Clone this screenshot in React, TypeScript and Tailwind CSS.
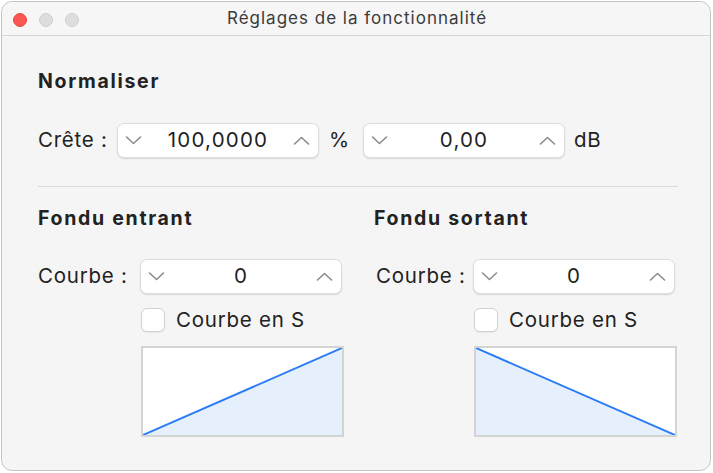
import React from "react";

const font = { fontFamily: "Inter, 'Noto Sans', sans-serif" };

const Chevron = ({ up }: { up?: boolean }) => (
  <svg width="17" height="9" viewBox="0 0 17 9" className="shrink-0">
    <path
      d={up ? "M1.5 8 L8.5 1.5 L15.5 8" : "M1.5 1 L8.5 7.5 L15.5 1"}
      fill="none"
      stroke="#8c8c8c"
      strokeWidth="1.6"
      strokeLinecap="round"
      strokeLinejoin="round"
    />
  </svg>
);

const Stepper = ({ value }: { value: string }) => (
  <div className="flex h-[35px] w-[202px] shrink-0 items-center justify-between rounded-[7px] border border-[#dcdcdc] bg-white pl-[7px] pr-[8px] shadow-[0_1px_1.5px_rgba(0,0,0,0.12)]">
    <Chevron />
    <span className="pl-[1px] text-[20.5px] leading-none tracking-[1.2px] text-[#1e1e1e]">{value}</span>
    <Chevron up />
  </div>
);

const Checkbox = ({ label }: { label: string }) => (
  <div className="flex h-[24px] items-center gap-[11px]">
    <div className="h-[24px] w-[24px] rounded-[6px] border border-[#d2d2d2] bg-white shadow-[0_1px_1px_rgba(0,0,0,0.06)]" />
    <span className="text-[20.5px] leading-none tracking-[0.75px] text-[#222]">{label}</span>
  </div>
);

const Curve = ({ rising }: { rising?: boolean }) => (
  <div className="h-[91px] w-[203px] border-2 border-[#d4d4d4] bg-white">
    <svg width="199" height="87" viewBox="0 0 199 87" className="block">
      <polygon
        points={rising ? "0,87 199,0 199,87" : "0,0 199,87 0,87"}
        fill="#e6f0fd"
      />
      <line
        x1="0"
        y1={rising ? 87 : 0}
        x2="199"
        y2={rising ? 0 : 87}
        stroke="#2a7cf6"
        strokeWidth="2"
      />
    </svg>
  </div>
);

const Title = ({ children }: { children: React.ReactNode }) => (
  <h2 className="whitespace-nowrap text-[19.5px] font-bold leading-[24px] tracking-[1.7px] text-[#222]">{children}</h2>
);

const Fade = ({ title, rising }: { title: string; rising?: boolean }) => (
  <div className="flex flex-col">
    <Title>{title}</Title>
    <div className="mt-[29px] flex items-center">
      <span
        className={
          rising
            ? "w-[102px] shrink-0 text-[20.5px] leading-none tracking-[0.75px] text-[#222]"
            : "w-[99px] shrink-0 pl-[2px] text-[20.5px] leading-none tracking-[0.75px] text-[#222]"
        }
      >
        Courbe :
      </span>
      <Stepper value="0" />
    </div>
    <div className={rising ? "ml-[103px] mt-[14px]" : "ml-[100px] mt-[14px]"}>
      <Checkbox label="Courbe en S" />
    </div>
    <div className={rising ? "ml-[103px] mt-[14px]" : "ml-[100px] mt-[14px]"}>
      <Curve rising={rising} />
    </div>
  </div>
);

export default function App() {
  return (
    <div className="h-[473px] w-[713px] bg-white p-px" style={font}>
      <div className="flex h-[470px] w-[710px] flex-col overflow-hidden rounded-[11px] border border-[#c4c4c4] bg-[#f5f5f5]">
        <div className="relative flex h-[34px] shrink-0 items-center border-b border-[#d6d6d6] bg-[#f6f6f6]">
          <div className="ml-[11px] mt-[2px] flex gap-[12px]">
            <div className="h-[14px] w-[14px] rounded-full border border-[#e2443f] bg-[#fd5754]" />
            <div className="h-[14px] w-[14px] rounded-full border border-[#cfcfcf] bg-[#dddddd]" />
            <div className="h-[14px] w-[14px] rounded-full border border-[#cfcfcf] bg-[#dddddd]" />
          </div>
          <div className="absolute inset-0 flex items-center justify-center pl-[2px] pt-[1px] text-[17px] tracking-[1px] text-[#3b3b3b]">
            Réglages de la fonctionnalité
          </div>
        </div>

        <div className="flex flex-col pl-[36px] pt-[33px]">
          <Title>Normaliser</Title>
          <div className="mt-[30px] flex items-center text-[20.5px] leading-none tracking-[0.75px] text-[#222]">
            <span className="w-[79px]">Crête :</span>
            <Stepper value="100,0000" />
            <span className="w-[44px] pl-[10px]">%</span>
            <Stepper value="0,00" />
            <span className="ml-[9px]">dB</span>
          </div>
          <div className="mt-[28px] h-px w-[640px] bg-[#dadada]" />
          <div className="mt-[19px] flex">
            <div className="w-[336px] shrink-0">
              <Fade title="Fondu entrant" rising />
            </div>
            <div className="shrink-0">
              <Fade title="Fondu sortant" />
            </div>
          </div>
        </div>
      </div>
    </div>
  );
}
